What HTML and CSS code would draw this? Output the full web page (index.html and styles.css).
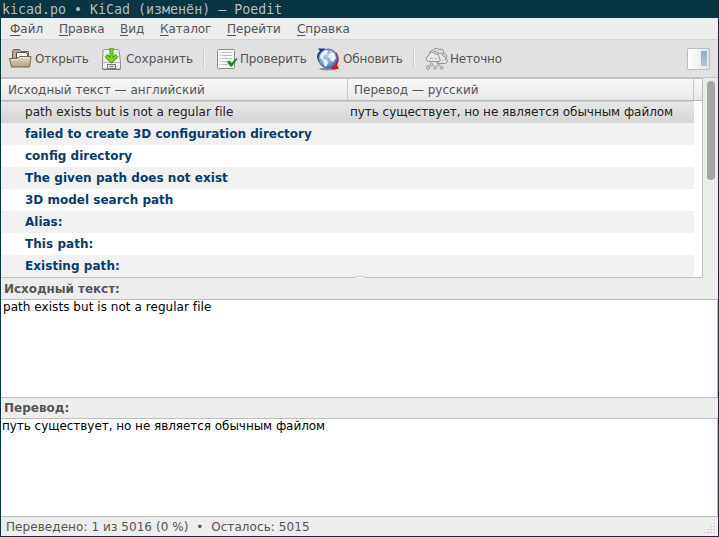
FILE: index.html
```html
<!DOCTYPE html>
<html lang="ru">
<head>
<meta charset="utf-8">
<title>kicad.po • KiCad (изменён) – Poedit</title>
<link rel="stylesheet" href="styles.css">
</head>
<body>
<div class="window">
  <header class="titlebar"><span>kicad.po • KiCad (изменён) – Poedit</span></header>
  <nav class="menu">
    <span class="m1"><u>Ф</u>айл</span><span class="m2"><u>П</u>равка</span><span class="m3"><u>В</u>ид</span><span class="m4"><u>К</u>аталог</span><span class="m5"><u>П</u>ерейти</span><span class="m6"><u>С</u>правка</span>
  </nav>
  <div class="toolbar">
    <div class="tool open">
      <svg width="24" height="24" viewBox="0 0 24 24">
        <defs>
          <linearGradient id="fold" x1="0" y1="0" x2="0" y2="1"><stop offset="0" stop-color="#e2d8c8"/><stop offset="1" stop-color="#b5a286"/></linearGradient>
        </defs>
        <path d="M4.500 19V4.500l1-2h6l1.500 2h7.500v15z" fill="#b9a68b" stroke="#6f5a42"/>
        <path d="M8.500 11V5.500h9l2 2V11z" fill="#fff" stroke="#55534f"/>
        <path d="M1.500 11.500h8l2-2h11.500l-1.500 10.500H3.500z" fill="url(#fold)" stroke="#7d6549" stroke-linejoin="round"/>
        <path d="M3 12.500h7l2-2h9.500" fill="none" stroke="#f5efe4" stroke-width=".8"/>
      </svg>
      <span>Открыть</span>
    </div>
    <div class="tool save">
      <svg width="24" height="24" viewBox="0 0 24 24">
        <path d="M5.500 2.500h13q1.500 0 1.700 2L21.500 15v7h-18v-7L4 4.500q.2-2 1.500-2z" fill="#f0f0ef" stroke="#8f8f8c"/>
        <path d="M4 15.500h17" stroke="#b5b5b3"/>
        <path d="M3.500 22.500h18" stroke="#777"/>
        <rect x="8.500" y="17.500" width="8" height="4" fill="#e6e6e6" stroke="#777"/>
        <path d="M10.500 19.500h4" stroke="#777"/>
        <path d="M12.500 1v12M7 8.500l5.500 5.500L18 8.500" fill="none" stroke="#4e9a06" stroke-width="4"/>
        <path d="M12.500 1.500v12M7.400 9l5.100 5 5.100-5" fill="none" stroke="#7fd32b" stroke-width="2.200"/>
      </svg>
      <span>Сохранить</span>
    </div>
    <i class="sep s1"></i>
    <div class="tool check">
      <svg width="24" height="24" viewBox="0 0 24 24">
        <rect x="2.500" y="2.500" width="17" height="19" rx="1" fill="#f7f7f6" stroke="#888a85"/>
        <path d="M7 5.500h10M7 8.500h10M7 11.500h10M7 14.500h6M7 17.500h6" stroke="#bcbcba"/>
        <path d="M4.500 5.500h1M4.500 8.500h1M4.500 11.500h1M4.500 14.500h1M4.500 17.500h1" stroke="#aaa"/>
        <path d="M12.500 14.800l2.200-.8 2 2.300 4.300-4.800 1 .5-5.200 7.300-1.500-.3z" fill="#0b9220" stroke="#087a16" stroke-width=".7"/>
      </svg>
      <span>Проверить</span>
    </div>
    <div class="tool refresh">
      <svg width="24" height="24" viewBox="0 0 24 24">
        <defs><radialGradient id="sea" cx=".4" cy=".35" r=".65"><stop offset="0" stop-color="#b3cdeb"/><stop offset=".65" stop-color="#7fa6d2"/><stop offset="1" stop-color="#416fa8"/></radialGradient></defs>
        <ellipse cx="12" cy="22" rx="9" ry="1.500" fill="#777" opacity=".8"/>
        <path d="M2 1.500h7v3C4 7 3 13 5 17 0 13 0 7 4 4z" fill="#1f3b75"/>
        <path d="M20 5c4 5 3 10 1 13l2 4h-8v-5z" fill="#d6121d"/>
        <circle cx="12" cy="11.500" r="9.500" fill="url(#sea)" stroke="#335c94" stroke-width=".8"/>
        <path d="M5 7l4-4 3 1-1 3-3 1-1 3 1 1-2 1-2-3zM7 12l4 1 1 3-2 4-2-2zM14 4l4 2 2 5-3 4-2-1-1-3-2-1 1-3 2-1z" fill="#edf3fa"/>
      </svg>
      <span>Обновить</span>
    </div>
    <i class="sep s2"></i>
    <div class="tool fuzzy">
      <svg width="24" height="24" viewBox="0 0 24 24" stroke="#888886" stroke-width=".9" fill="#dededd">
        <path d="M5 8a3 3 0 0 1 3-4.500 3.600 3.600 0 0 1 6-1 3.200 3.200 0 0 1 4.500 4 3 3 0 0 1 2.500 5 2.800 2.800 0 0 1-.5 5H13z"/>
        <path d="M12 9a3 3 0 0 1 6 0 2.500 2.500 0 0 1 2 4M9 5a2.500 2.500 0 0 1 4 1" fill="#e8e8e7"/>
        <path d="M3.500 14.500a2.800 2.800 0 0 1 0-5.500A3.500 3.500 0 0 1 10 7a3.300 3.300 0 0 1 4 4 2 2 0 0 1 0 3.500z" fill="#e9e9e8"/>
        <path d="M4 12q2-2 4 0M9 12q2-2 3 0" fill="none" stroke="#b1b1af"/>
        <circle cx="3" cy="20.500" r="1.700"/><circle cx="6.500" cy="17.500" r="1.300"/><circle cx="10" cy="20.700" r="1.400"/><circle cx="13.500" cy="17.500" r="1.300"/><circle cx="16.500" cy="20.700" r="1.400"/>
      </svg>
      <span>Неточно</span>
    </div>
    <div class="sidebar-toggle"><i></i></div>
  </div>
  <main class="list">
    <div class="table">
      <div class="head"><span class="c1">Исходный текст — английский</span><span class="c2">Перевод — русский</span><span class="c3"></span></div>
      <div class="row selected"><span class="src latin">path exists but is not a regular file</span><span class="cyr">путь существует, но не является обычным файлом</span></div>
      <div class="row alt">failed to create 3D configuration directory</div>
      <div class="row">config directory</div>
      <div class="row alt tight">The given path does not exist</div>
      <div class="row">3D model search path</div>
      <div class="row alt">Alias:</div>
      <div class="row tight">This path:</div>
      <div class="row alt tight">Existing path:</div>
    </div>
    <div class="scroll"><i></i></div>
    <div class="grip"><i></i><i></i><i></i></div>
  </main>
  <div class="label source-label">Исходный текст:</div>
  <div class="text source"><span class="latin">path exists but is not a regular file</span></div>
  <div class="label target-label">Перевод:</div>
  <div class="text target"><span class="cyr">путь существует, но не является обычным файлом</span></div>
  <footer class="status"><span>Переведено: 1 из 5016 (0 %)&nbsp; •&nbsp; Осталось: 5015</span>
    <svg width="12" height="12" viewBox="0 0 12 12"><path d="M9 1h2v1H9zM6 4h2v1H6zM9 4h2v1H9zM3 7h2v1H3zM6 7h2v1H6zM9 7h2v1H9zM0 10h2v1H0zM3 10h2v1H3zM6 10h2v1H6zM9 10h2v1H9z" fill="#ccc"/></svg>
  </footer>
</div>
</body>
</html>
```
FILE: styles.css
```css
* { box-sizing: border-box; }
body { margin: 0; font: 12px/16px "DejaVu Sans", sans-serif; color: #555; overflow: hidden; }
.window { width: 719px; height: 537px; background: #ededed; border: solid #073642; border-width: 0 1px 1px; display: flex; flex-direction: column; }
.window > * { flex-shrink: 0; }
span { white-space: pre; }
.titlebar { height: 18px; background: #073642; color: #b3bcba; font: 13.3px/19px "DejaVu Sans Mono", monospace; padding-left: 1px; }
.menu { height: 22px; border-bottom: 1px solid #d5d5d5; display: flex; padding: 3px 0 0 9px; letter-spacing: -.02px; }
.menu span { display: block; }
.m1 { width: 49px; }
.m2 { width: 61px; }
.m3 { width: 40px; }
.m4 { width: 67px; }
.m5 { width: 70px; }
.menu u { text-underline-offset: 2px; }
.toolbar { height: 38px; background: #e1e1e1; border-bottom: 1px solid #c5c5c5; display: flex; align-items: center; padding: 0 8px 0 7px; }
.tool { display: flex; align-items: center; gap: 3px; letter-spacing: -.15px; }
.tool svg { display: block; flex: none; }
.open { width: 91px; }
.save { width: 104px; letter-spacing: -.05px; }
.check { width: 101px; gap: 1px; }
.refresh { width: 93px; }
.sep { width: 2px; height: 19px; border-left: 1px solid #cbcbcb; border-right: 1px solid #f0f0f0; }
.s1 { margin-right: 10px; }
.s2 { margin: 0 10px 0 4px; }
.fuzzy { gap: 1px; }
.sidebar-toggle { margin-left: auto; width: 23px; height: 22px; border: 1px solid #bdbdbd; border-radius: 2px; background: linear-gradient(to right, #fff, #e3e3e3); padding: 2px; display: flex; justify-content: flex-end; }
.sidebar-toggle i { width: 6px; height: 15px; background: linear-gradient(#98aac6, #b5c4d6); }
.list { height: 200px; display: flex; position: relative; }
.table { width: 702px; border: solid #c0c0c0; border-width: 1px 1px 1px 0; background: #fff; overflow: hidden; }
.head { height: 22px; display: flex; background: linear-gradient(#f8f8f8, #e8e8e8); border-bottom: 1px solid #b8b8b8; line-height: 22px; }
.head span { border-right: 1px solid #c8c8c8; }
.c1 { width: 347px; padding-left: 7px; letter-spacing: .02px; }
.c2 { width: 346px; padding-left: 6px; }
.head .c3 { flex: 1; border: 0; }
.row { height: 22px; width: 693px; padding-left: 24px; line-height: 23px; font-weight: bold; color: #0c3a69; }
.row.tight { letter-spacing: .05px; }
.alt { background: #f1f1f1; }
.row.selected { display: flex; background: linear-gradient(#e8e8e8, #d5d5d5); border: dotted #c9c9c9; border-width: 1px 0; font-weight: normal; color: #222; line-height: 21px; }
.latin { letter-spacing: .05px; }
.cyr { letter-spacing: -.045px; }
.src { width: 325px; }
.scroll { width: 15px; background: #ebebeb; padding: 3px 0 0 4px; }
.scroll i { display: block; width: 8px; height: 99px; border-radius: 4px; background: #a5a5a5; }
.grip { position: absolute; left: 355px; bottom: 0; display: flex; gap: 1px; background: #f5f5f5; height: 2px; }
.grip i { width: 2px; height: 1px; background: #c8c8c8; }
.label { height: 21px; font-weight: bold; padding-left: 3px; line-height: 23px; letter-spacing: -.06px; }
.text { background: #fff; border: 1px solid #bdbdbd; border-left: 0; color: #000; line-height: 15px; }
.source { height: 99px; padding-left: 2px; }
.target-label { height: 20px; line-height: 21px; letter-spacing: 0; }
.target { height: 99px; padding-left: 1px; }
.status { flex: 1; display: flex; justify-content: space-between; padding: 2px 2px 0 5px; letter-spacing: .07px; }
.status svg { margin-top: 3px; }
```
